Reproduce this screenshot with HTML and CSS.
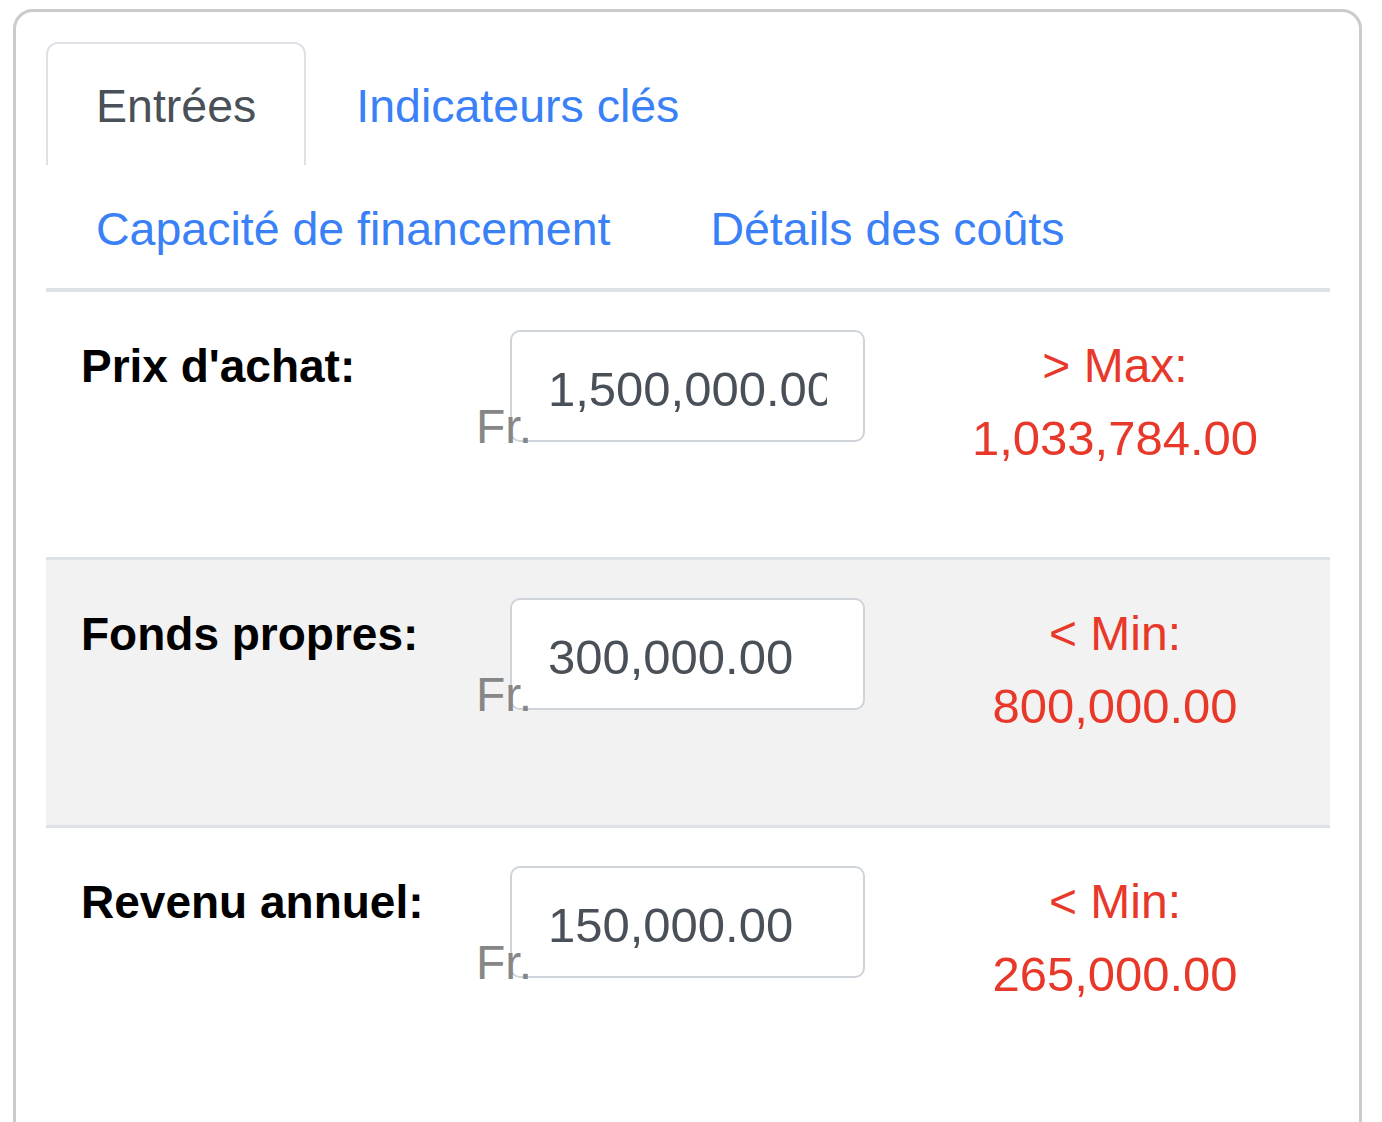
FILE: index.html
```html
<!DOCTYPE html>
<html lang="fr">
<head>
<meta charset="utf-8">
<title>Entrées</title>
<link rel="stylesheet" href="styles.css">
</head>
<body>
<div class="card">
  <ul class="tabs">
    <li><a class="tab active" href="#">Entrées</a></li>
    <li><a class="tab" href="#">Indicateurs clés</a></li>
    <li><a class="tab" href="#">Capacité de financement</a></li>
    <li><a class="tab" href="#">Détails des coûts</a></li>
  </ul>
  <div class="rows">
    <div class="row">
      <div class="label">Prix d'achat:</div>
      <div class="field">
        <span class="unit">Fr.</span>
        <input class="amount" type="text" value="1,500,000.00">
      </div>
      <div class="limit"><span>&gt; Max:</span><span class="num">1,033,784.00</span></div>
    </div>
    <div class="row striped">
      <div class="label">Fonds propres:</div>
      <div class="field">
        <span class="unit">Fr.</span>
        <input class="amount" type="text" value="300,000.00">
      </div>
      <div class="limit"><span>&lt; Min:</span><span class="num">800,000.00</span></div>
    </div>
    <div class="row">
      <div class="label">Revenu annuel:</div>
      <div class="field">
        <span class="unit">Fr.</span>
        <input class="amount" type="text" value="150,000.00">
      </div>
      <div class="limit"><span>&lt; Min:</span><span class="num">265,000.00</span></div>
    </div>
  </div>
</div>
</body>
</html>
```
FILE: styles.css
```css
html, body {
  margin: 0;
  padding: 0;
  background: #ffffff;
}

body {
  font-family: "Liberation Sans", Arial, sans-serif;
  font-size: 48px;
  line-height: 72px;
  color: #000000;
}

.card {
  margin: 9px 20px 0 13px;
  min-height: 1200px;
  border: 3px solid #cbcbcb;
  border-radius: 20px;
  padding: 30px 29px 0 30px;
  box-sizing: border-box;
}

.tabs {
  list-style: none;
  margin: 0;
  padding: 0;
  display: flex;
  flex-wrap: wrap;
  border-bottom: 4px solid #dee2e6;
}

.tab {
  display: block;
  font-size: 46.5px;
  line-height: 72px;
  padding: 26px 48px 23px;
  border: 2px solid transparent;
  border-bottom: 0;
  border-radius: 12px 12px 0 0;
  color: #3a80f6;
  text-decoration: none;
}

.tab.active {
  color: #495057;
  border-color: #dee2e6;
  background: #ffffff;
}

.row {
  display: grid;
  grid-template-columns: 430px 424px 1fr;
  padding: 38px 0 83px;
  border-top: 3px solid #dee2e6;
}

.row:first-child {
  border-top: 0;
}

.row.striped {
  background: #f2f2f2;
}

.label {
  padding-left: 35px;
  font-size: 46px;
  font-weight: bold;
  color: #000000;
}

.field {
  display: flex;
  align-items: flex-start;
}

.unit {
  position: relative;
  z-index: 1;
  margin-top: 61px;
  color: #878787;
  font-size: 48px;
  line-height: 72px;
}

.amount {
  margin-left: -22px;
  width: 355px;
  height: 112px;
  box-sizing: border-box;
  padding: 6px 36px 0;
  border: 2px solid #ced4da;
  border-radius: 10px;
  background: #ffffff;
  font-family: "Liberation Sans", Arial, sans-serif;
  font-size: 49px;
  color: #495057;
  outline: none;
}

.limit {
  display: flex;
  flex-direction: column;
  align-items: center;
  color: #e8382a;
}

.limit .num {
  font-size: 49px;
}
```
